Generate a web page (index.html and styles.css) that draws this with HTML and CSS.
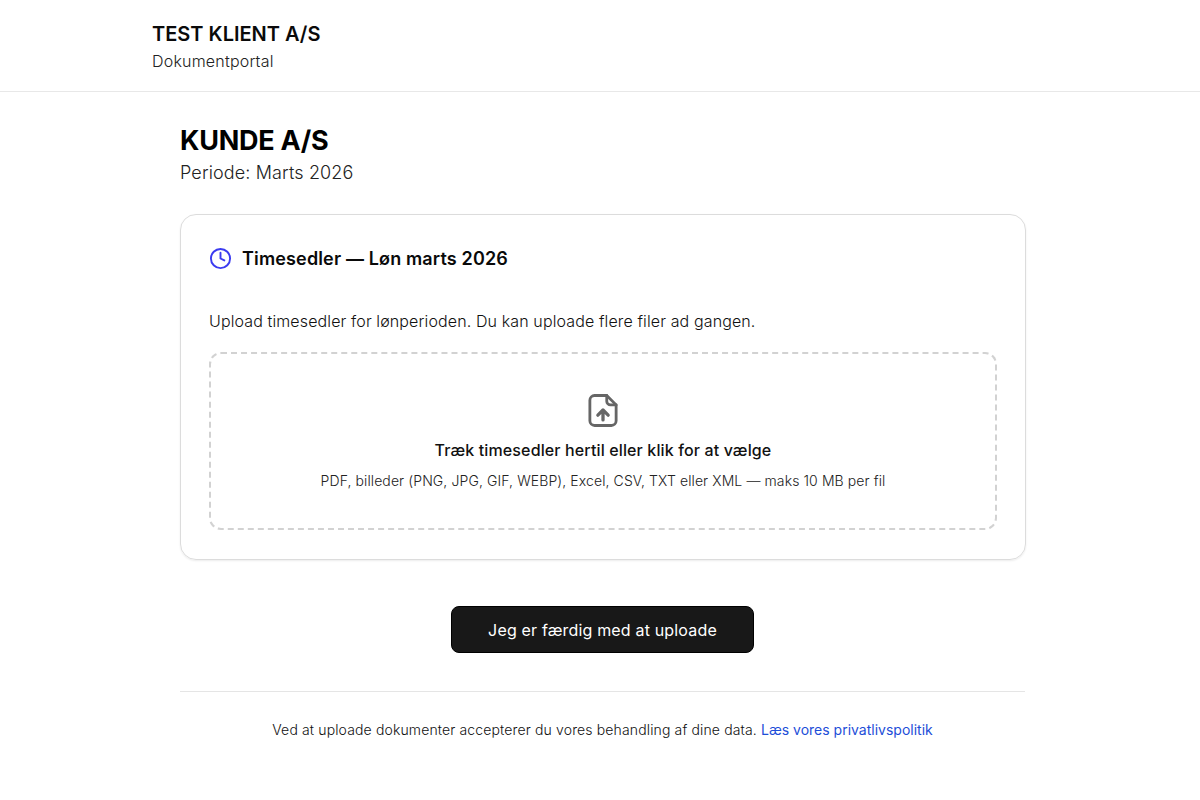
FILE: index.html
```html
<!DOCTYPE html>
<html lang="da">
<head>
<meta charset="utf-8">
<title>Dokumentportal</title>
<link rel="stylesheet" href="styles.css">
</head>
<body>
<header class="site-header">
  <div class="brand">TEST KLIENT A/S</div>
  <div class="brand-sub">Dokumentportal</div>
</header>
<main class="main">
  <h1 class="customer">KUNDE A/S</h1>
  <p class="period">Periode: Marts 2026</p>
  <section class="card">
    <div class="card-head">
      <svg class="clock" viewBox="0 0 24 24" fill="none" stroke="currentColor" stroke-width="2" stroke-linecap="round" stroke-linejoin="round"><circle cx="12" cy="12" r="10"/><path d="M12 6v6l4 2"/></svg>
      <h2 class="card-title">Timesedler — Løn marts 2026</h2>
    </div>
    <p class="card-desc">Upload timesedler for lønperioden. Du kan uploade flere filer ad gangen.</p>
    <div class="drop">
      <svg class="file" viewBox="0 0 32 36" fill="none" stroke="currentColor" stroke-width="3" stroke-linecap="round" stroke-linejoin="round"><path d="M20 2H7a5 5 0 0 0-5 5v22a5 5 0 0 0 5 5h18a5 5 0 0 0 5-5V12z"/><path d="M20 2v6a4 4 0 0 0 4 4h6"/><path class="file-arrow" d="M16 28V17.500M10.500 23 16 17.500l5.500 5.500"/></svg>
      <div class="drop-title">Træk timesedler hertil eller klik for at vælge</div>
      <div class="drop-note">PDF, billeder (PNG, JPG, GIF, WEBP), Excel, CSV, TXT eller XML — maks 10 MB per fil</div>
    </div>
  </section>
  <div class="actions"><button class="done" type="button">Jeg er færdig med at uploade</button></div>
  <footer class="foot">Ved at uploade dokumenter accepterer du vores behandling af dine data. <a href="#">Læs vores privatlivspolitik</a></footer>
</main>
</body>
</html>
```
FILE: styles.css
```css
* { box-sizing: border-box; }
html, body { margin: 0; padding: 0; }
body { background: #fff; color: #0a0a0a; font-family: Inter, "Liberation Sans", sans-serif; }
.site-header { height: 92px; padding: 21px 152px 0; border-bottom: 1px solid #e8e8e8; }
.brand { font-size: 20px; font-weight: 600; line-height: 26px; color: #0a0a0a; }
.brand-sub { font-size: 16px; font-weight: 300; line-height: 22px; margin-top: 3px; letter-spacing: .2px; color: #222; }
.main { width: 846px; margin-left: 180px; padding-top: 33px; }
.customer { margin: 0; font-size: 27px; font-weight: 700; line-height: 32px; letter-spacing: -.25px; color: #000; }
.period { margin: 2px 0 0; font-size: 18px; font-weight: 300; line-height: 28px; letter-spacing: .13px; color: #222; }
.card { margin-top: 27px; height: 346px; padding: 29px 28px; border: 1px solid #dcdcdc; border-radius: 16px; box-shadow: 0 1px 2px rgba(0,0,0,.08); }
.card-head { display: flex; align-items: center; gap: 10px; height: 30px; }
.clock { width: 23px; height: 23px; margin-top: -2px; color: #3b3bf0; flex: none; }
.card-title { margin: 0; font-size: 18px; font-weight: 600; line-height: 30px; letter-spacing: .15px; color: #0a0a0a; }
.card-desc { margin: 36px 0 0; font-size: 16px; font-weight: 300; line-height: 22px; letter-spacing: .12px; color: #111; }
.drop { margin-top: 20px; height: 178px; border: 2px dashed #d2d2d2; border-radius: 12px; display: flex; flex-direction: column; align-items: center; padding-top: 39px; }
.file { width: 30px; height: 35px; color: #666; }
.file-arrow { stroke-width: 3.500; }
.drop-title { margin-top: 10px; font-size: 16px; font-weight: 500; line-height: 24px; letter-spacing: .13px; color: #111; }
.drop-note { margin-top: 10px; font-size: 14px; font-weight: 300; line-height: 18px; letter-spacing: .1px; color: #222; }
.actions { display: flex; justify-content: center; margin: 46px 1px 0 0; }
.done { width: 303px; height: 47px; border: 1px solid #000; border-radius: 8px; background: #181818; color: #fff; font-family: inherit; font-size: 16px; font-weight: 400; letter-spacing: .17px; }
.foot { margin: 38px 1px 0 0; padding-top: 28px; border-top: 1px solid #e5e5e5; text-align: center; font-size: 14px; font-weight: 300; line-height: 20px; letter-spacing: .14px; color: #111; }
.foot a { color: #1d4ed8; font-weight: 400; letter-spacing: 0; text-decoration: none; }
```
